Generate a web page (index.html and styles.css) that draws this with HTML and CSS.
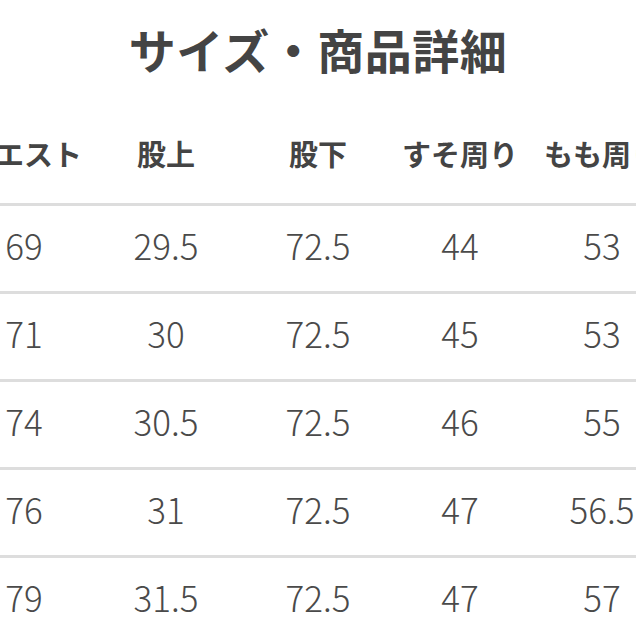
FILE: index.html
```html
<!DOCTYPE html>
<html lang="ja">
<head>
<meta charset="utf-8">
<title>サイズ・商品詳細</title>
<link rel="stylesheet" href="styles.css">
</head>
<body>
<div class="page">
  <h1 class="title">サイズ・商品詳細</h1>
  <div class="table">
    <div class="row head">
      <div class="cell">ウエスト</div><div class="cell">股上</div><div class="cell">股下</div><div class="cell">すそ周り</div><div class="cell">もも周り</div>
    </div>
    <div class="row">
      <div class="cell">69</div><div class="cell">29.5</div><div class="cell">72.5</div><div class="cell">44</div><div class="cell">53</div>
    </div>
    <div class="row">
      <div class="cell">71</div><div class="cell">30</div><div class="cell">72.5</div><div class="cell">45</div><div class="cell">53</div>
    </div>
    <div class="row">
      <div class="cell">74</div><div class="cell">30.5</div><div class="cell">72.5</div><div class="cell">46</div><div class="cell">55</div>
    </div>
    <div class="row">
      <div class="cell">76</div><div class="cell">31</div><div class="cell">72.5</div><div class="cell">47</div><div class="cell">56.5</div>
    </div>
    <div class="row">
      <div class="cell">79</div><div class="cell">31.5</div><div class="cell">72.5</div><div class="cell">47</div><div class="cell">57</div>
    </div>
  </div>
</div>
</body>
</html>
```
FILE: styles.css
```css
html, body {
  margin: 0;
  padding: 0;
  background: #ffffff;
}
.page {
  width: 636px;
  height: 636px;
  overflow: hidden;
  font-family: "Noto Sans CJK JP", "Noto Sans", sans-serif;
  color: #444444;
}
.title {
  margin: 0;
  height: 104px;
  line-height: 98px;
  text-align: center;
  font-size: 47px;
  font-weight: 700;
  letter-spacing: 0.5px;
  color: #444444;
}
.table {
  margin-left: -47px;
  width: 730px;
}
.row {
  display: grid;
  grid-template-columns: 142px 142px 162px 122px 162px;
  height: 77px;
  padding-bottom: 8px;
  align-items: center;
  border-bottom: 3px solid #dddddd;
  font-size: 35px;
  font-weight: 300;
  color: #4a4a4a;
}
.row.head {
  height: 94px;
  padding-top: 2px;
  padding-bottom: 3px;
  font-size: 29px;
  font-weight: 700;
  color: #444444;
}
.cell {
  text-align: center;
  white-space: nowrap;
}
```
